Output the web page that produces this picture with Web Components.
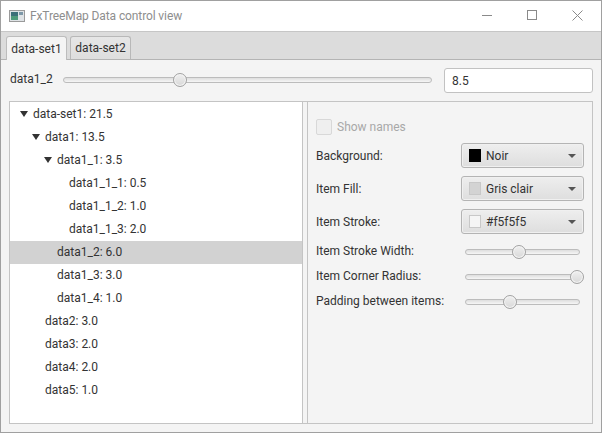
<!DOCTYPE html>
<html>
<head>
<meta charset="utf-8">
<title>FxTreeMap Data control view</title>
<style>
  html, body { margin: 0; padding: 0; }
  body { width: 602px; height: 433px; overflow: hidden; font-family: Roboto, "Open Sans", sans-serif; font-size: 12px; color: #333; }
</style>
</head>
<body>
<fx-window></fx-window>

<script>
class FxSlider extends HTMLElement {
  connectedCallback() {
    const pos = this.getAttribute('pos') || 0;
    this.attachShadow({ mode: 'open' }).innerHTML = `
      <style>
        :host { display: block; position: relative; height: 14px; }
        .track { position: absolute; left: 0; right: 0; top: 4px; height: 6px; box-sizing: border-box;
          background: linear-gradient(#dedede, #f6f6f6); border: 1px solid #bcbcbc; border-radius: 3px; }
        .thumb { position: absolute; left: ${pos}px; top: 0; width: 14px; height: 14px; box-sizing: border-box;
          border-radius: 50%; border: 1px solid #a2a2a2; background: linear-gradient(#f0f0f0, #d8d8d8); box-shadow: inset 0 0 0 1px #f6f6f6; }
      </style>
      <div class="track"></div><div class="thumb"></div>`;
  }
}
customElements.define('fx-slider', FxSlider);

class FxCombo extends HTMLElement {
  connectedCallback() {
    const swatch = this.getAttribute('swatch');
    this.attachShadow({ mode: 'open' }).innerHTML = `
      <style>
        :host { display: flex; align-items: center; width: 123px; height: 25px; box-sizing: border-box;
          border: 1px solid #b4b4b4; border-radius: 3px; background: linear-gradient(#eeeeee, #dedede);
          padding-left: 7px; color: #333; box-shadow: inset 0 0 0 1px #f0f0f0; }
        .swatch { width: 12px; height: 13px; box-sizing: border-box; margin-right: 5px; background: ${swatch};
          border: 1px solid ${this.getAttribute('edge') || swatch}; }
        .label { flex: 1; }
        .arrow { width: 0; height: 0; border: 4px solid transparent; border-top: 4px solid #555; border-bottom: 0; margin-right: 7px; }
      </style>
      <span class="swatch"></span><span class="label"><slot></slot></span><span class="arrow"></span>`;
  }
}
customElements.define('fx-combo', FxCombo);

class FxTreeRow extends HTMLElement {
  connectedCallback() {
    const level = +this.getAttribute('level');
    const open = this.hasAttribute('open');
    this.attachShadow({ mode: 'open' }).innerHTML = `
      <style>
        :host { display: flex; align-items: center; height: 23.05px; padding-left: ${10 + level * 12}px; color: #333; }
        :host([selected]) { background: #d2d2d2; }
        .toggle { width: 13px; height: 100%; flex: none; display: flex; align-items: center; }
        .toggle i { display: ${open ? 'block' : 'none'}; width: 0; height: 0; border: 4px solid transparent;
          border-top: 6px solid #333; border-bottom: 0; margin-top: -1px; }
        span { position: relative; top: -1px; white-space: nowrap; }
      </style>
      <div class="toggle"><i></i></div><span><slot></slot></span>`;
  }
}
customElements.define('fx-tree-row', FxTreeRow);

class FxTitlebar extends HTMLElement {
  connectedCallback() {
    this.attachShadow({ mode: 'open' }).innerHTML = `
      <style>
        :host { display: flex; align-items: center; height: 30px; background: #fff; flex: none; }
        svg { display: block; flex: none; }
        .icon { margin-left: 8px; margin-right: 5px; }
        .title { flex: 1; color: #8e8e8e; letter-spacing: -0.11px; }
        .btn { width: 45px; height: 28px; margin-bottom: 2px; box-sizing: border-box; padding-right: 19px;
          display: flex; align-items: center; justify-content: flex-end; flex: none; }
        .btn.close { padding-right: 18px; }
      </style>
      <svg class="icon" width="16" height="14" viewBox="0 0 16 14">
        <rect x="0.5" y="1.5" width="15" height="11" fill="#dfe3e6" stroke="#9a9a9a"/>
        <rect x="2" y="3" width="7" height="8" fill="#3c6f78"/>
        <rect x="2" y="7" width="7" height="4" fill="#4f9a7a"/>
        <rect x="10" y="3" width="4" height="3" fill="#7d98a8"/>
      </svg>
      <span class="title">FxTreeMap Data control view</span>
      <div class="btn"><svg width="10" height="10"><path d="M0 5.5H10" stroke="#8a8a8a"/></svg></div>
      <div class="btn"><svg width="10" height="10"><rect x="0.5" y="0.5" width="9" height="9" fill="none" stroke="#8a8a8a"/></svg></div>
      <div class="btn close"><svg width="11" height="11"><path d="M0.5 0.5L10.5 10.5M10.5 0.5L0.5 10.5" stroke="#8a8a8a"/></svg></div>`;
  }
}
customElements.define('fx-titlebar', FxTitlebar);

class FxTabs extends HTMLElement {
  connectedCallback() {
    this.attachShadow({ mode: 'open' }).innerHTML = `
      <style>
        :host { display: flex; align-items: flex-end; gap: 3px; height: 29px; box-sizing: border-box; flex: none;
          padding-left: 5px; background: #dcdcdc; border-bottom: 1px solid #b4b4b4; border-top: 1px solid #c6c6c6; }
        .tab { width: 61px; height: 23px; box-sizing: border-box; display: flex; align-items: center; justify-content: center; color: #333;
          border: 1px solid #b8b8b8; border-bottom: 0; border-radius: 3px 3px 0 0; background: linear-gradient(#e6e6e6, #dedede); }
        .tab.on { width: 61px; height: 24px; margin-bottom: -1px; background: #f4f4f4; border-color: #bdbdbd; }
      </style>
      <div class="tab on">data-set1</div><div class="tab">data-set2</div>`;
  }
}
customElements.define('fx-tabs', FxTabs);

class FxTree extends HTMLElement {
  connectedCallback() {
    this.attachShadow({ mode: 'open' }).innerHTML = `
      <style>
        :host { display: block; width: 293px; flex: none; background: #fff; padding-top: 1px; box-sizing: border-box; border-right: 1px solid #c4c4c4; }
      </style>
      <fx-tree-row level="0" open>data-set1: 21.5</fx-tree-row>
      <fx-tree-row level="1" open>data1: 13.5</fx-tree-row>
      <fx-tree-row level="2" open>data1_1: 3.5</fx-tree-row>
      <fx-tree-row level="3">data1_1_1: 0.5</fx-tree-row>
      <fx-tree-row level="3">data1_1_2: 1.0</fx-tree-row>
      <fx-tree-row level="3">data1_1_3: 2.0</fx-tree-row>
      <fx-tree-row level="2" selected>data1_2: 6.0</fx-tree-row>
      <fx-tree-row level="2">data1_3: 3.0</fx-tree-row>
      <fx-tree-row level="2">data1_4: 1.0</fx-tree-row>
      <fx-tree-row level="1">data2: 3.0</fx-tree-row>
      <fx-tree-row level="1">data3: 2.0</fx-tree-row>
      <fx-tree-row level="1">data4: 2.0</fx-tree-row>
      <fx-tree-row level="1">data5: 1.0</fx-tree-row>`;
  }
}
customElements.define('fx-tree', FxTree);

class FxOptions extends HTMLElement {
  connectedCallback() {
    this.attachShadow({ mode: 'open' }).innerHTML = `
      <style>
        :host { display: block; flex: 1; padding: 17px 8px 0 8px; border-left: 1px solid #c4c4c4; margin-left: 4px; background: #f4f4f4; color: #333; }
        .check { display: flex; align-items: center; gap: 5px; color: #a8a8a8; height: 16px; margin-bottom: 4px; }
        .box { width: 16px; height: 16px; box-sizing: border-box; border: 1px solid #d8d8d8; border-radius: 2px; background: #efefef; }
        .row { display: flex; align-items: center; justify-content: space-between; height: 33px; }
        .row.s { height: 25px; padding-right: 4px; }
        .row.s.first { margin-top: 1px; }
        .row.s fx-slider { width: 115px; }
        .row.s span { position: relative; top: -1px; }
      </style>
      <div class="check"><div class="box"></div><span>Show names</span></div>
      <div class="row"><span>Background:</span><fx-combo swatch="#000">Noir</fx-combo></div>
      <div class="row"><span>Item Fill:</span><fx-combo swatch="#d3d3d3" edge="#c8c8c8">Gris clair</fx-combo></div>
      <div class="row"><span>Item Stroke:</span><fx-combo swatch="#f5f5f5" edge="#c8c8c8">#f5f5f5</fx-combo></div>
      <div class="row s first"><span>Item Stroke Width:</span><fx-slider pos="47"></fx-slider></div>
      <div class="row s"><span>Item Corner Radius:</span><fx-slider pos="105"></fx-slider></div>
      <div class="row s"><span>Padding between items:</span><fx-slider pos="38"></fx-slider></div>`;
  }
}
customElements.define('fx-options', FxOptions);

class FxValueBar extends HTMLElement {
  connectedCallback() {
    this.attachShadow({ mode: 'open' }).innerHTML = `
      <style>
        :host { display: flex; align-items: flex-start; height: 41px; box-sizing: border-box; flex: none; padding: 8px 8px 0 9px; color: #333; }
        span { width: 53px; flex: none; line-height: 23px; }
        fx-slider { width: 369px; flex: none; margin-top: 5px; }
        .field { margin-left: 12px; width: 149px; height: 25px; box-sizing: border-box; border: 1px solid #c2c2c2; border-radius: 3px;
          background: #fff; padding: 0 7px; display: flex; align-items: center; }
      </style>
      <span>data1_2</span><fx-slider pos="110"></fx-slider><div class="field">8.5</div>`;
  }
}
customElements.define('fx-value-bar', FxValueBar);

class FxWindow extends HTMLElement {
  connectedCallback() {
    this.attachShadow({ mode: 'open' }).innerHTML = `
      <style>
        :host { display: flex; flex-direction: column; width: 602px; height: 433px; box-sizing: border-box;
          border: 1px solid #a0a0a0; background: #f4f4f4; }
        .split { display: flex; height: 323px; margin: 0 8px; box-sizing: border-box; border: 1px solid #c4c4c4; }
      </style>
      <fx-titlebar></fx-titlebar>
      <fx-tabs></fx-tabs>
      <fx-value-bar></fx-value-bar>
      <div class="split"><fx-tree></fx-tree><fx-options></fx-options></div>`;
  }
}
customElements.define('fx-window', FxWindow);
</script>
</body>
</html>
